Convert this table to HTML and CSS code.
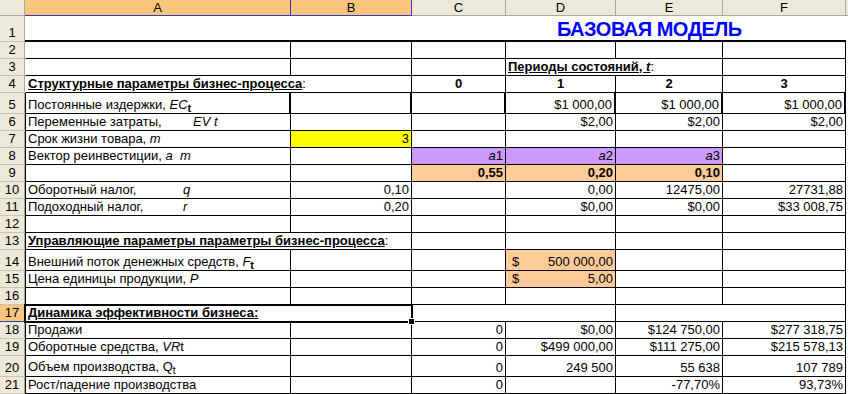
FILE: index.html
```html
<!DOCTYPE html>
<html lang="ru">
<head>
<meta charset="utf-8">
<title>Базовая модель</title>
<link rel="stylesheet" href="styles.css">
</head>
<body>
<div class="sheet">
  <div class="ch corner"></div>
  <div class="ch sel">A</div>
  <div class="ch sel selb">B</div>
  <div class="ch">C</div>
  <div class="ch">D</div>
  <div class="ch">E</div>
  <div class="ch">F</div>

  <div class="rh">1</div>
  <div class="cell r1 span3"></div>
  <div class="cell r1 span3 title">БАЗОВАЯ МОДЕЛЬ</div>

  <div class="rh">2</div>
  <div class="cell a open"></div><div class="cell"></div><div class="cell"></div><div class="cell"></div><div class="cell"></div><div class="cell"></div>

  <div class="rh">3</div>
  <div class="cell a open"></div><div class="cell"></div><div class="cell"></div>
  <div class="cell span2"><span><b class="u">Периоды состояний, <i>t</i></b>:</span></div>
  <div class="cell"></div>

  <div class="rh">4</div>
  <div class="cell a open span2"><span><b class="u">Структурные параметры бизнес-процесса</b>:</span></div>
  <div class="cell c"><b>0</b></div><div class="cell c"><b>1</b></div><div class="cell c"><b>2</b></div><div class="cell c"><b>3</b></div>

  <div class="rh">5</div>
  <div class="cell a thick"><span>Постоянные издержки, <i>EC</i><span class="sb">t</span></span></div>
  <div class="cell thick"></div><div class="cell thick"></div>
  <div class="cell thick r">$1 000,00</div><div class="cell thick r">$1 000,00</div><div class="cell thick r">$1 000,00</div>

  <div class="rh">6</div>
  <div class="cell a"><span><span class="lbl w165">Переменные затраты,</span><i>EV t</i></span></div>
  <div class="cell"></div><div class="cell"></div>
  <div class="cell r">$2,00</div><div class="cell r">$2,00</div><div class="cell r">$2,00</div>

  <div class="rh">7</div>
  <div class="cell a"><span>Срок жизни товара, <i>m</i></span></div>
  <div class="cell r yellow">3</div><div class="cell"></div><div class="cell"></div><div class="cell"></div><div class="cell"></div>

  <div class="rh">8</div>
  <div class="cell a"><span>Вектор реинвестиции, <i>a  m</i></span></div>
  <div class="cell"></div>
  <div class="cell r violet"><span><i>a</i>1</span></div>
  <div class="cell r violet"><span><i>a</i>2</span></div>
  <div class="cell r violet"><span><i>a</i>3</span></div>
  <div class="cell"></div>

  <div class="rh">9</div>
  <div class="cell a"></div><div class="cell"></div>
  <div class="cell r peach"><b>0,55</b></div><div class="cell r peach"><b>0,20</b></div><div class="cell r peach"><b>0,10</b></div>
  <div class="cell"></div>

  <div class="rh">10</div>
  <div class="cell a"><span><span class="lbl w155">Оборотный налог,</span><i>q</i></span></div>
  <div class="cell r">0,10</div><div class="cell"></div>
  <div class="cell r">0,00</div><div class="cell r">12475,00</div><div class="cell r">27731,88</div>

  <div class="rh">11</div>
  <div class="cell a"><span><span class="lbl w155">Подоходный налог,</span><i>r</i></span></div>
  <div class="cell r">0,20</div><div class="cell"></div>
  <div class="cell r">$0,00</div><div class="cell r">$0,00</div><div class="cell r">$33 008,75</div>

  <div class="rh">12</div>
  <div class="cell a"></div><div class="cell"></div><div class="cell"></div><div class="cell"></div><div class="cell"></div><div class="cell"></div>

  <div class="rh">13</div>
  <div class="cell a span2"><span><b class="u">Управляющие параметры параметры бизнес-процесса</b>:</span></div>
  <div class="cell"></div><div class="cell"></div><div class="cell"></div><div class="cell"></div>

  <div class="rh">14</div>
  <div class="cell a"><span>Внешний поток денежных средств, <i>F</i><span class="sb">t</span></span></div>
  <div class="cell"></div><div class="cell"></div>
  <div class="cell money peach"><span class="cur">$</span><span>500 000,00</span></div>
  <div class="cell"></div><div class="cell"></div>

  <div class="rh">15</div>
  <div class="cell a"><span>Цена единицы продукции, <i>P</i></span></div>
  <div class="cell"></div><div class="cell"></div>
  <div class="cell money peach"><span class="cur">$</span><span>5,00</span></div>
  <div class="cell"></div><div class="cell"></div>

  <div class="rh">16</div>
  <div class="cell a"></div><div class="cell"></div><div class="cell"></div><div class="cell"></div><div class="cell"></div><div class="cell"></div>

  <div class="rh active">17</div>
  <div class="cell a span2 selected"><b class="u">Динамика эффективности бизнеса:</b></div>
  <div class="cell span2"></div>
  <div class="cell span2"></div>

  <div class="rh">18</div>
  <div class="cell a">Продажи</div><div class="cell"></div>
  <div class="cell r">0</div><div class="cell r">$0,00</div><div class="cell r">$124 750,00</div><div class="cell r">$277 318,75</div>

  <div class="rh">19</div>
  <div class="cell a"><span>Оборотные средства, <i>VR</i>t</span></div><div class="cell"></div>
  <div class="cell r">0</div><div class="cell r">$499 000,00</div><div class="cell r">$111 275,00</div><div class="cell r">$215 578,13</div>

  <div class="rh">20</div>
  <div class="cell a"><span>Объем производства, Q<span class="sb2">t</span></span></div><div class="cell"></div>
  <div class="cell r">0</div><div class="cell r">249 500</div><div class="cell r">55 638</div><div class="cell r">107 789</div>

  <div class="rh">21</div>
  <div class="cell a">Рост/падение производства</div><div class="cell"></div>
  <div class="cell r">0</div><div class="cell r"></div><div class="cell r">-77,70%</div><div class="cell r">93,73%</div>
</div>
</body>
</html>
```

FILE: styles.css
```css
html, body {
  margin: 0;
  padding: 0;
  background: #ffffff;
}

.sheet {
  display: grid;
  width: 848px;
  height: 394px;
  overflow: hidden;
  grid-template-columns: 25px 266px 121px 94px 110px 107px 123px;
  grid-template-rows: 16px 26px 17px 17px 17px 21px 17px 17px 17px 17px 17px 17px 17px 17px 21px 17px 17px 17px 17px 17px 21px 17px;
  background: linear-gradient(#ECE9D8 0 15px, #ACA899 15px 16px, #ffffff 16px);
  font-family: "Liberation Sans", Arial, sans-serif;
  font-size: 13px;
  color: #000;
}

.ch {
  box-sizing: border-box;
  background: #ECE9D8;
  border-right: 1px solid #ACA899;
  border-bottom: 1px solid #ACA899;
  display: flex;
  align-items: center;
  justify-content: center;
  line-height: 15px;
}

.ch.sel {
  background: #F8C67D;
  border-bottom-color: #3838B8;
  border-right-color: #3838B8;
}

.rh {
  box-sizing: border-box;
  background: #ECE9D8;
  border-right: 1px solid #ACA899;
  border-bottom: 1px solid #C9C5B2;
  display: flex;
  align-items: flex-end;
  justify-content: center;
  line-height: 16px;
}

.rh.active {
  background: #F8C67D;
  border-right-color: #3838B8;
  border-bottom-color: #3838B8;
}

.cell {
  box-sizing: border-box;
  border-right: 1px solid #000;
  border-bottom: 1px solid #000;
  display: flex;
  align-items: flex-end;
  padding: 0 2px;
  line-height: 16px;
  white-space: pre;
  min-width: 0;
}

.cell.a {
  border-left: 1px solid #000;
}

.cell.a.open {
  border-left-color: #fff;
}

.cell.r1 {
  border-right: none;
  border-left: none;
  border-bottom: 2px solid #000;
}

.title {
  padding-left: 51px;
  color: #0000FF;
  font-weight: bold;
  font-size: 20px;
  letter-spacing: -0.5px;
  line-height: 22px;
}

.span2 { grid-column: span 2; }
.span3 { grid-column: span 3; }

.thick { border-right-width: 2px; }

.r { justify-content: flex-end; }
.c { justify-content: center; }

.u { text-decoration: underline; }

.money { justify-content: space-between; }
.cur { padding-left: 4px; }

.yellow { background: #FFFF00; }
.violet { background: #CC99FF; }
.peach { background: #FFCC99; }

.lbl { display: inline-block; }
.w155 { width: 155px; }
.w165 { width: 165px; }

.sb {
  position: relative;
  top: 3px;
  font-weight: bold;
  font-size: 11px;
}

.sb2 {
  position: relative;
  top: 3px;
  font-size: 10px;
}

.selected {
  position: relative;
  z-index: 1;
  outline: 2px solid #000;
  outline-offset: -1px;
}

.selected::after {
  content: "";
  position: absolute;
  right: -4px;
  bottom: -4px;
  width: 5px;
  height: 5px;
  background: #000;
  border: 1px solid #fff;
}
```
